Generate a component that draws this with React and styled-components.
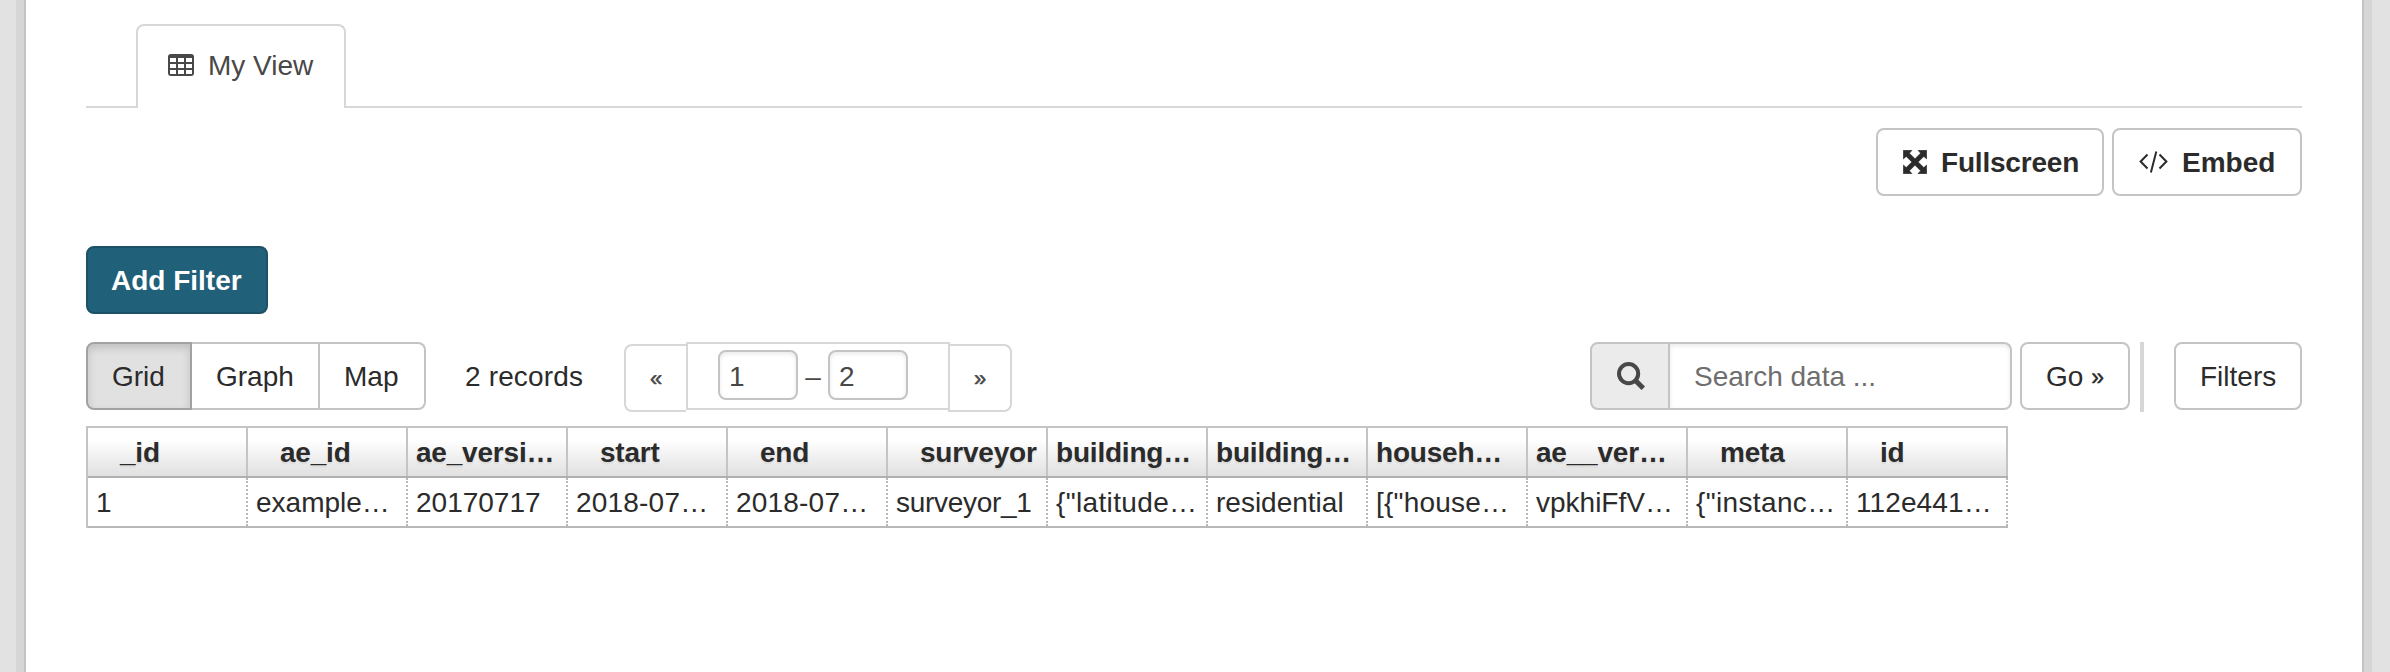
import React from "react";
import styled, { createGlobalStyle, css } from "styled-components";

const Global = createGlobalStyle`
  *, *::before, *::after { box-sizing: border-box; }
  body { margin: 0; background: #e2e2e2; }
  body, button, input { font-family: "Liberation Sans", Arial, sans-serif; font-size: 28px; color: #2b2b2b; }
`;

const Page = styled.div`
  height: 672px;
  padding: 0 18px 0 16px;
  overflow: hidden;
  background-color: #e2e2e2;
`;
const Frame = styled.div`
  height: 100%;
  padding: 0 8px;
  background: #d6d6d6;
`;
const Sheet = styled.main`
  height: 100%;
  padding: 24px 60px 0;
  background: #fff;
  border: solid #c4c4c4;
  border-width: 0 2px;
`;
const Tabs = styled.nav`
  display: flex;
  height: 84px;
  padding-left: 50px;
  box-shadow: inset 0 -2px #d7d7d7;
`;
const Tab = styled.a`
  display: flex;
  align-items: center;
  gap: 14px;
  width: 210px;
  padding: 0 0 2px 30px;
  border: 2px solid #d7d7d7;
  border-bottom: 0;
  border-radius: 8px 8px 0 0;
  background: #fff;
  color: #484848;
  line-height: 32px;
  white-space: nowrap;
  svg { margin-top: -2px; }
`;
const Actions = styled.div`
  display: flex;
  justify-content: flex-end;
  gap: 8px;
  margin-top: 20px;
`;
const Button = styled.button`
  display: flex;
  align-items: center;
  height: 68px;
  width: ${(p) => p.$width}px;
  padding: 2px 0 0 ${(p) => p.$pad ?? 24}px;
  gap: ${(p) => p.$gap ?? 0}px;
  border: 2px solid #c4c4c4;
  border-radius: 8px;
  background: #fff;
  color: #2b2b2b;
  font-weight: ${(p) => (p.$bold ? 700 : 400)};
  letter-spacing: ${(p) => p.$track ?? 0}px;
  line-height: 32px;
  white-space: nowrap;
  svg { margin-top: -2px; }
  ${(p) =>
    p.$primary &&
    css`
      background: #206078;
      border-color: #1b5268;
      color: #fff;
      margin-top: 50px;
    `}
`;
const Toolbar = styled.div`
  display: flex;
  align-items: flex-start;
  height: 84px;
  margin-top: 28px;
`;
const Group = styled.div`
  display: flex;
`;
const Segment = styled(Button)`
  border-radius: 0;
  border-left-width: 0;
  &:first-child { border-left-width: 2px; border-radius: 8px 0 0 8px; }
  &:last-child { border-radius: 0 8px 8px 0; }
  ${(p) =>
    p.$active &&
    css`
      background: #e1e1e1;
      border-color: #a2a2a2;
      box-shadow: inset 0 4px 8px rgba(0, 0, 0, 0.15);
    `}
`;
const Records = styled.div`
  width: 198px;
  padding-left: 39px;
  line-height: 70px;
  letter-spacing: 0.15px;
  white-space: nowrap;
`;
const Pager = styled.div`
  display: flex;
`;
const PageArrow = styled.a`
  width: ${(p) => (p.$end ? 64 : 62)}px;
  height: 68px;
  margin-top: 2px;
  border: 2px solid #d7d7d7;
  border-right-width: ${(p) => (p.$end ? 2 : 0)}px;
  border-radius: ${(p) => (p.$end ? "0 8px 8px 0" : "8px 0 0 8px")};
  margin-left: ${(p) => (p.$end ? -2 : 0)}px;
  color: #484848;
  font-size: 22px;
  line-height: 65px;
  text-align: center;
  -webkit-text-stroke: 0.5px #484848;
`;
const Range = styled.div`
  display: flex;
  width: 264px;
  height: 68px;
  padding: 6px 0 0 30px;
  border: 2px solid #d7d7d7;
  color: #484848;
`;
const RangeInput = styled.input`
  width: 80px;
  height: 50px;
  padding: 3px 0 0 9px;
  border: 2px solid #c4c4c4;
  border-radius: 8px;
  box-shadow: inset 0 2px 4px rgba(0, 0, 0, 0.09);
  color: #484848;
  outline: 0;
`;
const Dash = styled.span`
  width: 30px;
  line-height: 53px;
  text-align: center;
`;
const Search = styled.form`
  display: flex;
  margin-left: auto;
`;
const SearchIcon = styled.span`
  display: flex;
  align-items: center;
  justify-content: center;
  width: 80px;
  height: 68px;
  padding-left: 2px;
  border: 2px solid #c4c4c4;
  border-radius: 8px 0 0 8px;
  background: #ebebeb;
`;
const SearchInput = styled.input`
  width: 342px;
  height: 68px;
  margin-right: 8px;
  padding: 2px 0 0 24px;
  border: 2px solid #c4c4c4;
  border-left: 0;
  border-radius: 0 8px 8px 0;
  box-shadow: inset 0 2px 4px rgba(0, 0, 0, 0.09);
  outline: 0;
  &::placeholder { color: #6e6e6e; opacity: 1; }
`;
const GoMark = styled.span`
  padding-left: 8px;
  font-size: 23px;
  -webkit-text-stroke: 0.4px #2b2b2b;
`;
const Divider = styled.span`
  width: 4px;
  height: 70px;
  margin: 0 30px 0 10px;
  background: #d7d7d7;
`;
const Table = styled.div`
  width: 1922px;
  border-left: 2px solid #c4c4c4;
`;
const Row = styled.div`
  display: grid;
  grid-template-columns: repeat(12, 160px);
  height: ${(p) => (p.$head ? 52 : 50)}px;
  border-bottom: 2px solid ${(p) => (p.$head ? "#b0b0b0" : "#b8b8b8")};
  ${(p) =>
    p.$head &&
    css`
      border-top: 2px solid #c4c4c4;
      background: linear-gradient(#fff 25%, #e0e0e0);
      font-weight: 700;
    `}
`;
const HeadCell = styled.div`
  height: 48px;
  padding-left: ${(p) => (p.$cut ? 8 : 32)}px;
  border-right: 2px solid #c4c4c4;
  line-height: 50px;
  letter-spacing: -0.2px;
  white-space: nowrap;
  text-shadow: 0 2px 2px rgba(0, 0, 0, 0.08);
`;
const Cell = styled.div`
  height: 48px;
  padding-left: 8px;
  border-right: 2px dotted #b8b8b8;
  line-height: 50px;
  letter-spacing: ${(p) => p.$track}px;
  white-space: nowrap;
`;

const TableIcon = () => (
  <svg width="26" height="22" viewBox="0 0 26 22">
    <rect width="26" height="22" rx="3" fill="#484848" />
    <path
      fill="#fff"
      d="M2 4h6v4H2zM10 4h6v4h-6zM18 4h6v4h-6zM2 10h6v4H2zM10 10h6v4h-6zM18 10h6v4h-6zM2 16h6v4H2zM10 16h6v4h-6zM18 16h6v4h-6z"
    />
  </svg>
);
const ExpandIcon = () => (
  <svg width="24" height="24" viewBox="0 0 24 24" fill="#2b2b2b" stroke="#2b2b2b" strokeWidth="0.6" strokeLinejoin="round">
    <path d="M.3.3h8.7l-2.6 2.9L12 8.8l5.6-5.6L15 .3h8.7V9l-2.9-2.6L15.2 12l5.6 5.6 2.9-2.6v8.7H15l2.6-2.9-5.6-5.6-5.6 5.6L9 23.700H.3V15l2.900 2.600L8.800 12 3.200 6.400.3 9z" />
  </svg>
);
const CodeIcon = () => (
  <svg width="30" height="22" viewBox="0 0 30 22" fill="none" stroke="#2b2b2b" strokeWidth="2">
    <path d="M8.500 3.500 1.600 10.500l6.900 7M20.500 3.500l6.900 7-6.900 7M17.300.4l-5.400 21" />
  </svg>
);
const MagnifierIcon = () => (
  <svg width="28" height="28" viewBox="0 0 28 28" fill="none" stroke="#484848">
    <circle cx="11.600" cy="11.600" r="9.600" strokeWidth="4" />
    <path d="m18 18 8.300 8.300" strokeWidth="5" />
  </svg>
);

const columns = [
  { name: "_id", value: "1" },
  { name: "ae_id", value: "example…" },
  { name: "ae_versi…", value: "20170717" },
  { name: "start", value: "2018-07…", track: 0.2 },
  { name: "end", value: "2018-07…", track: 0.2 },
  { name: "surveyor", value: "surveyor_1", track: -0.3 },
  { name: "building…", value: '{"latitude…', track: 0.35 },
  { name: "building…", value: "residential" },
  { name: "househ…", value: '[{"house…', track: 0.2 },
  { name: "ae__ver…", value: "vpkhiFfV…" },
  { name: "meta", value: '{"instanc…', track: 0.35 },
  { name: "id", value: "112e441…", track: 0.1 },
];

export default function App() {
  return (
    <Page>
      <Global />
      <Frame>
        <Sheet>
          <Tabs>
            <Tab><TableIcon />My View</Tab>
          </Tabs>
          <Actions>
            <Button $width={228} $pad={25} $gap={14} $track={-0.2} $bold><ExpandIcon />Fullscreen</Button>
            <Button $width={190} $pad={25} $gap={13} $bold><CodeIcon />Embed</Button>
          </Actions>
          <Button $width={182} $pad={23} $bold $primary>Add Filter</Button>
          <Toolbar>
            <Group>
              <Segment $width={106} $active>Grid</Segment>
              <Segment $width={128}>Graph</Segment>
              <Segment $width={106}>Map</Segment>
            </Group>
            <Records>2 records</Records>
            <Pager>
              <PageArrow>«</PageArrow>
              <Range>
                <RangeInput defaultValue="1" />
                <Dash>–</Dash>
                <RangeInput defaultValue="2" />
              </Range>
              <PageArrow $end>»</PageArrow>
            </Pager>
            <Search>
              <SearchIcon><MagnifierIcon /></SearchIcon>
              <SearchInput placeholder="Search data ..." />
              <Button type="button" $width={110}>Go<GoMark>»</GoMark></Button>
            </Search>
            <Divider />
            <Button $width={128}>Filters</Button>
          </Toolbar>
          <Table>
            <Row $head>
              {columns.map(({ name }, i) => (
                <HeadCell key={i} $cut={name.endsWith("…")}>{name}</HeadCell>
              ))}
            </Row>
            <Row>
              {columns.map(({ value, track = 0 }, i) => (
                <Cell key={i} $track={track}>{value}</Cell>
              ))}
            </Row>
          </Table>
        </Sheet>
      </Frame>
    </Page>
  );
}
